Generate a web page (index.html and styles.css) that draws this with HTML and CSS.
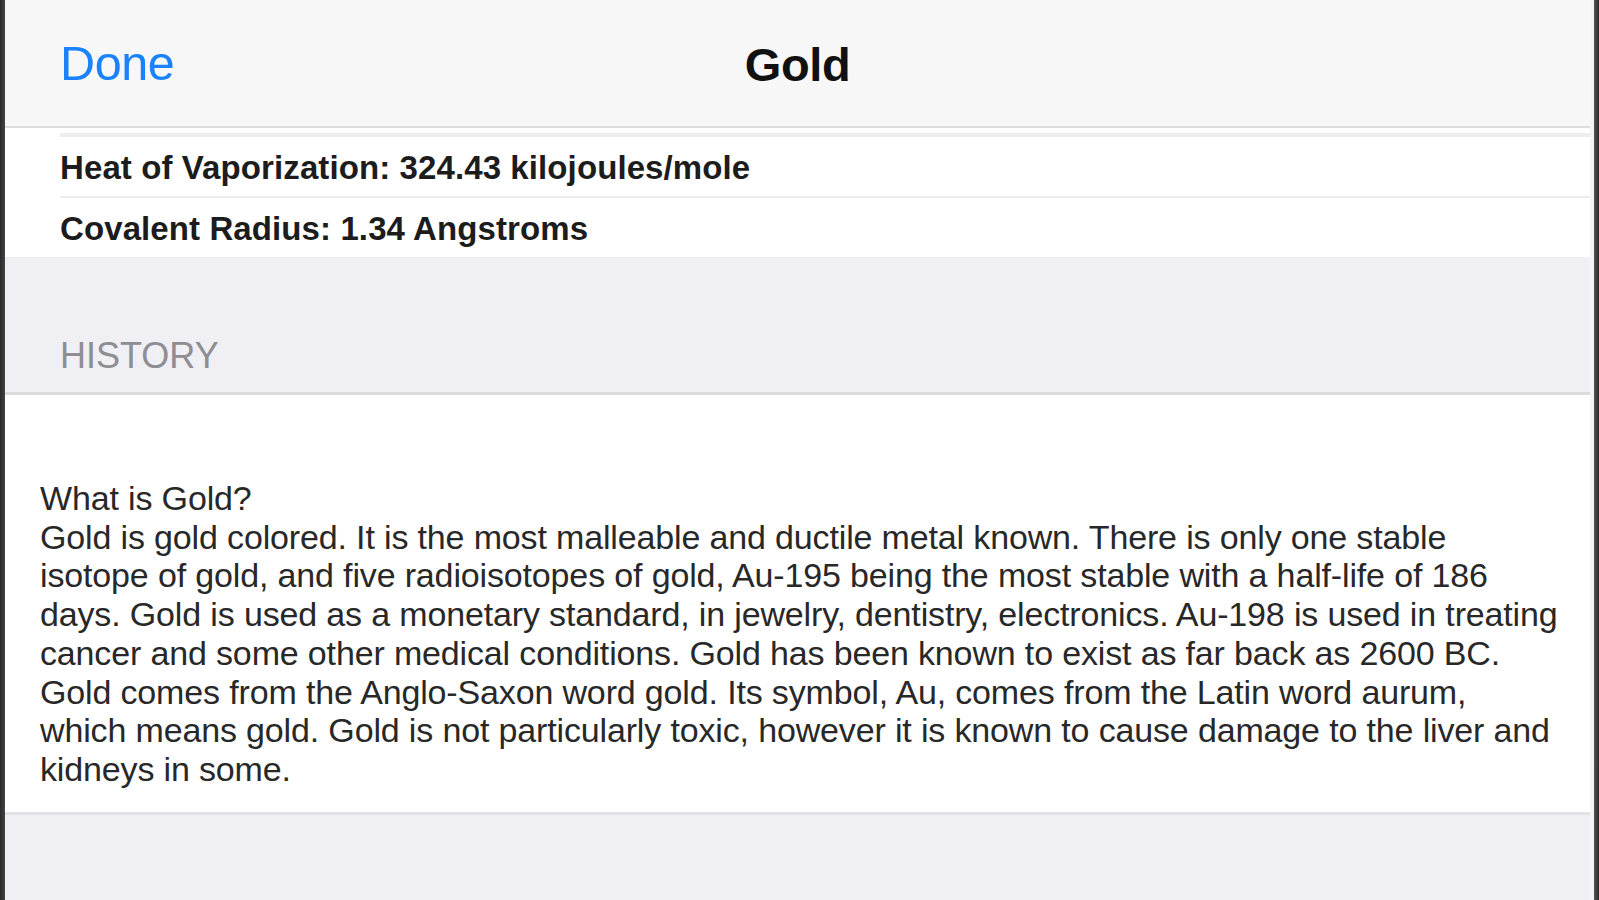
FILE: index.html
```html
<!DOCTYPE html>
<html lang="en">
<head>
<meta charset="utf-8">
<title>Gold</title>
<link rel="stylesheet" href="styles.css">
</head>
<body>
<div class="frame">
  <div class="edge edge-left"></div>
  <div class="screen">
    <header class="navbar">
      <span class="nav-btn">Done</span>
      <span class="nav-title">Gold</span>
      <span class="nav-spacer"></span>
    </header>
    <section class="group group-top">
      <div class="row row-cut"></div>
      <div class="row"><span class="row-text">Heat of Vaporization: 324.43 kilojoules/mole</span></div>
      <div class="row"><span class="row-text">Covalent Radius: 1.34 Angstroms</span></div>
    </section>
    <div class="section-header">HISTORY</div>
    <section class="group group-history">
      <p class="history">What is Gold?<br>Gold is gold colored. It is the most malleable and ductile metal known. There is only one stable<br>isotope of gold, and five radioisotopes of gold, Au-195 being the most stable with a half-life of 186<br>days. Gold is used as a monetary standard, in jewelry, dentistry, electronics. Au-198 is used in treating<br>cancer and some other medical conditions. Gold has been known to exist as far back as 2600 BC.<br>Gold comes from the Anglo-Saxon word gold. Its symbol, Au, comes from the Latin word aurum,<br>which means gold. Gold is not particularly toxic, however it is known to cause damage to the liver and<br>kidneys in some.</p>
    </section>
    <div class="footer-fill"></div>
  </div>
  <div class="gutter"></div>
  <div class="edge edge-right"></div>
</div>
</body>
</html>
```

FILE: styles.css
```css
html, body {
  margin: 0;
  padding: 0;
  height: 100%;
  background: #efeff4;
}

.frame {
  display: flex;
  height: 900px;
  overflow: hidden;
  font-family: "Liberation Sans", Arial, sans-serif;
}

.edge {
  width: 5px;
  flex: none;
  background: linear-gradient(to right, #2a2a2a, #444444);
}

.edge-right {
  background: linear-gradient(to right, #555555, #2a2a2a);
}

.gutter {
  width: 4px;
  flex: none;
  background: #f4f4f6;
}

.screen {
  flex: 1;
  display: flex;
  flex-direction: column;
  background: #efeff4;
  min-width: 0;
}

.navbar {
  height: 126px;
  flex: none;
  display: flex;
  align-items: center;
  padding: 0 55px;
  background: #f7f7f7;
  border-bottom: 2px solid #dedede;
}

.nav-btn {
  flex: 1;
  font-size: 48.5px;
  color: #1a82fb;
  letter-spacing: -0.4px;
}

.nav-title {
  padding-top: 3px;
  font-size: 47px;
  font-weight: 700;
  color: #111;
  letter-spacing: -0.4px;
}

.nav-spacer {
  flex: 1;
}

.group {
  background: #fff;
}

.group-top {
  padding-top: 5px;
}

.row {
  margin-left: 55px;
  height: 59px;
  padding-top: 2px;
  box-sizing: border-box;
  display: flex;
  align-items: center;
  border-top: 2px solid #ededed;
}

.row + .row {
  height: 61px;
}

.row-cut {
  height: 0;
  padding: 0;
}

.row-text {
  font-size: 33px;
  font-weight: 700;
  color: #1c1c1c;
  letter-spacing: 0.1px;
}

.section-header {
  height: 138px;
  box-sizing: border-box;
  padding: 0 55px 15px;
  display: flex;
  align-items: flex-end;
  font-size: 36px;
  color: #8d8d92;
  border-bottom: 3px solid #dcdce0;
}

.group-history {
  padding: 84px 15px 23px 35px;
  border-bottom: 3px solid #e2e2e6;
}

.history {
  margin: 0;
  font-size: 34px;
  line-height: 38.7px;
  color: #282828;
  letter-spacing: -0.15px;
  white-space: nowrap;
}

.footer-fill {
  flex: 1;
}
```
